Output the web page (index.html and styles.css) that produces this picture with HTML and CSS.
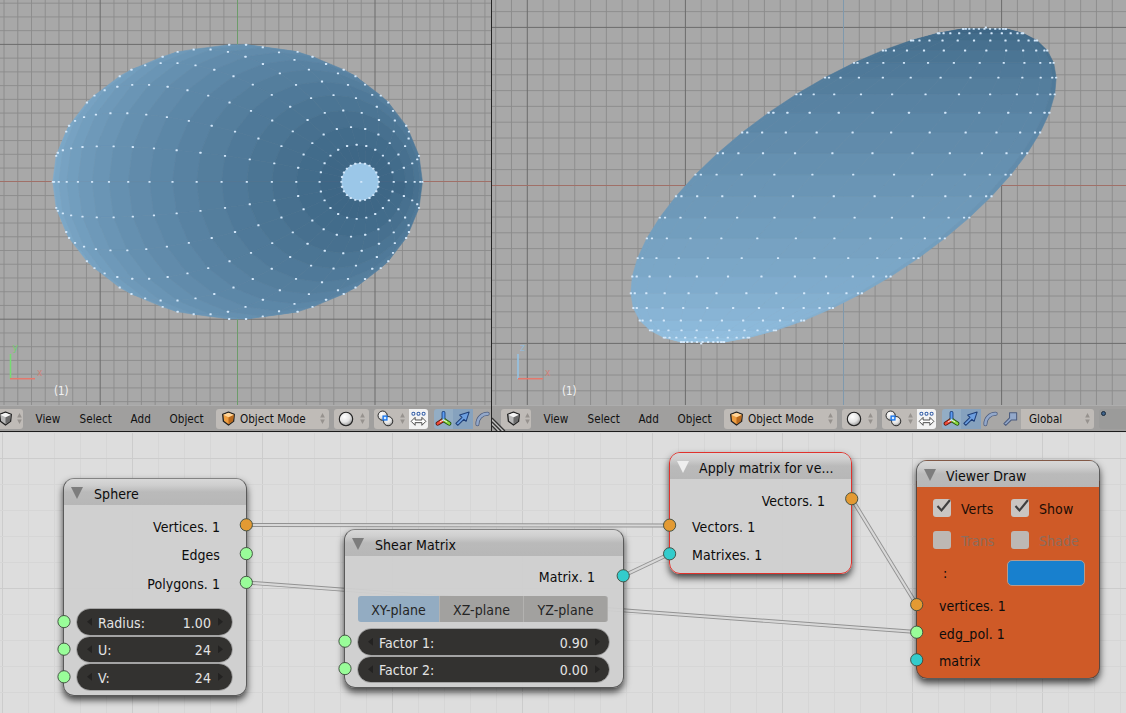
FILE: index.html
```
<!DOCTYPE html>
<html lang="en">
<head>
<meta charset="utf-8">
<title>Shear matrix</title>
<link rel="stylesheet" href="styles.css">
</head>
<body>
<svg class="defs" width="0" height="0">
  <defs>
    <radialGradient id="ball" cx=".38" cy=".32" r=".75"><stop offset="0" stop-color="#fff"/><stop offset=".55" stop-color="#e4e4e4"/><stop offset="1" stop-color="#8d8d8d"/></radialGradient>
    <symbol id="cube" viewBox="0 0 16 16">
      <path d="M8 1.2 14.2 3.6 13.4 11 8 15 2.6 11 1.8 3.6Z" fill="var(--left)" stroke="#222" stroke-width="1.4" stroke-linejoin="round"/>
      <path d="M8 6.6 13.6 4 12.9 10.7 8 14.3Z" fill="var(--right)"/>
      <path d="M8 1.8 13.6 4 8 6.6 2.4 4Z" fill="var(--top)"/>
    </symbol>
    <symbol id="updown" viewBox="0 0 6 14"><path d="M3 .5 5.8 5.8H.2ZM3 13.5 5.8 8.2H.2Z" fill="#96928e"/></symbol>
    <symbol id="sphere" viewBox="0 0 16 16"><circle cx="8" cy="8" r="6.7" fill="url(#ball)" stroke="#222" stroke-width="1.1"/></symbol>
    <symbol id="pivot" viewBox="0 0 18 18">
      <circle cx="6" cy="6" r="4.9" fill="url(#ball)" stroke="#222"/><circle cx="11.8" cy="11.8" r="4.9" fill="url(#ball)" stroke="#222"/>
      <rect x="6.5" y="6.5" width="4" height="4" fill="#d9ecff" stroke="#1b78ee" stroke-width="1.5"/>
    </symbol>
    <symbol id="centers" viewBox="0 0 18 18">
      <g fill="#fff" stroke="#345ea6" stroke-width="1.1"><circle cx="3.6" cy="4" r="1.6"/><circle cx="9" cy="4" r="1.6"/><circle cx="14.4" cy="4" r="1.6"/></g>
      <path d="M1.2 12 5.4 7.8V10.6H12.6V7.8L16.8 12 12.6 16.2V13.4H5.4V16.2Z" fill="#fff" stroke="#444" stroke-linejoin="round"/>
    </symbol>
    <symbol id="axes" viewBox="0 0 18 18">
      <g stroke-linecap="round" fill="none">
        <path d="M9 10.5V3" stroke="#173c78" stroke-width="4"/><path d="M9 10.5 3 14.3" stroke="#5a1a12" stroke-width="4.6"/><path d="M9 10.5 15 14.3" stroke="#25520e" stroke-width="4.6"/>
        <path d="M9 10.5 3 14.3" stroke="#f04a36" stroke-width="2.8"/><path d="M9 10.5 15 14.3" stroke="#8cda3d" stroke-width="2.8"/><path d="M9 10.5V3" stroke="#5c9cf2" stroke-width="2.2"/><path d="M9 10.5 5.5 12.5M9 10.5 12.5 12.5" stroke="#eee" stroke-width="1"/>
      </g>
    </symbol>
    <symbol id="move" viewBox="0 0 18 18"><path d="M2 14.2 8.5 7.8 6 5.4 16 2.2 12.8 12 10.5 9.8 4 16.2Z" fill="#6c9fe0" stroke="#1f3f78" stroke-width="1.1" stroke-linejoin="round"/></symbol>
    <symbol id="rotate" viewBox="0 0 18 18"><path d="M3.6 15C3.6 9 8 4 14.5 4" fill="none" stroke="#4c5c7e" stroke-width="4.2" stroke-linecap="round"/><path d="M3.6 15C3.6 9 8 4 14.5 4" fill="none" stroke="#93a8ca" stroke-width="2.6" stroke-linecap="round"/></symbol>
    <symbol id="scale" viewBox="0 0 18 18"><path d="M2 14.4 8 8.4V3H15.5V10.5H10L4 16.4Z" fill="#93a8ca" stroke="#4c5c7e" stroke-width="1.1" stroke-linejoin="round"/></symbol>
  </defs>
</svg>

<main class="views">
  <section class="view view-top">
    <svg class="canvas" id="top" width="491" height="405" viewBox="0 0 491 405"></svg>
    <div class="bar"></div>
  </section>
  <section class="view view-front">
    <svg class="canvas" id="front" width="634" height="405" viewBox="492 0 634 405"></svg>
    <div class="bar"></div>
    <svg class="corner" width="14" height="14" viewBox="0 0 14 14"><path d="M0 1 13 14M0 5 9 14M0 9 5 14" stroke="#333" stroke-width="1.2"/><path d="M0 3 11 14M0 7 7 14" stroke="#ccc" stroke-width=".8"/></svg>
  </section>
</main>

<section class="editor">
  <svg class="links" id="links" width="1126" height="281" viewBox="0 432 1126 281"></svg>

  <article class="node sphere">
    <header class="title"><i class="fold"></i>Sphere</header>
    <div class="outputs"><span>Vertices. 1</span><span class="plain">Edges</span><span>Polygons. 1</span></div>
    <div class="fields">
      <div class="field"><b class="dec"></b><span>Radius:</span><span class="val">1.00</span><b class="inc"></b></div>
      <div class="field"><b class="dec"></b><span>U:</span><span class="val">24</span><b class="inc"></b></div>
      <div class="field"><b class="dec"></b><span>V:</span><span class="val">24</span><b class="inc"></b></div>
    </div>
  </article>

  <article class="node shear">
    <header class="title"><i class="fold"></i>Shear Matrix</header>
    <div class="outputs"><span>Matrix. 1</span></div>
    <div class="tabs"><span class="tab on">XY-plane</span><span class="tab">XZ-plane</span><span class="tab">YZ-plane</span></div>
    <div class="fields">
      <div class="field"><b class="dec"></b><span>Factor 1:</span><span class="val">0.90</span><b class="inc"></b></div>
      <div class="field"><b class="dec"></b><span>Factor 2:</span><span class="val">0.00</span><b class="inc"></b></div>
    </div>
  </article>

  <article class="node apply">
    <header class="title"><i class="fold"></i>Apply matrix for ve...</header>
    <div class="outputs"><span>Vectors. 1</span></div>
    <div class="inputs"><span>Vectors. 1</span><span>Matrixes. 1</span></div>
  </article>

  <article class="node viewer">
    <header class="title"><i class="fold"></i>Viewer Draw</header>
    <div class="checks">
      <label><svg class="box" viewBox="0 0 18 18"><path d="M4.5 7 8.5 11.5 17 1" fill="none" stroke="#3f3f3f" stroke-width="2.1"/></svg>Verts</label>
      <label><svg class="box" viewBox="0 0 18 18"><path d="M4.5 7 8.5 11.5 17 1" fill="none" stroke="#3f3f3f" stroke-width="2.1"/></svg>Show</label>
      <label class="off"><svg class="box" viewBox="0 0 18 18"></svg>Trans</label>
      <label class="off"><svg class="box" viewBox="0 0 18 18"></svg>Shade</label>
    </div>
    <div class="color"><span>:</span><span class="swatch"></span></div>
    <div class="inputs"><span>vertices. 1</span><span>edg_pol. 1</span><span>matrix</span></div>
  </article>

  <svg class="links" id="sockets" width="1126" height="281" viewBox="0 432 1126 281"></svg>
</section>

<template id="bar">
  <span class="btn editor-type"><svg class="cube gray"><use href="#cube"/></svg><svg class="ud"><use href="#updown"/></svg></span>
  <span class="m m1">View</span><span class="m m2">Select</span><span class="m m3">Add</span><span class="m m4">Object</span>
  <span class="btn mode"><svg class="cube orange"><use href="#cube"/></svg><span>Object Mode</span><svg class="ud"><use href="#updown"/></svg></span>
  <span class="btn shading"><svg class="i16"><use href="#sphere"/></svg><svg class="ud"><use href="#updown"/></svg></span>
  <span class="btn pivot"><svg class="i18"><use href="#pivot"/></svg><svg class="ud"><use href="#updown"/></svg></span>
  <span class="btn centers"><svg class="i18"><use href="#centers"/></svg></span>
  <span class="btn tool blue first"><svg class="i18"><use href="#axes"/></svg></span>
  <span class="btn tool blue2"><svg class="i18"><use href="#move"/></svg></span>
  <span class="btn tool"><svg class="i18"><use href="#rotate"/></svg></span>
  <span class="btn tool wide-only"><svg class="i18"><use href="#scale"/></svg></span>
  <span class="btn global wide-only"><span>Global</span><svg class="ud"><use href="#updown"/></svg></span>
  <span class="btn layers wide-only"><i></i></span>
</template>
<script src="scene.js"></script>
</body>
</html>
```
FILE: styles.css
```
* { box-sizing: border-box; }
body {
  margin: 0; width: 1126px; height: 713px; overflow: hidden;
  display: flex; flex-direction: column; background: #ddd;
  font-family: "DejaVu Sans Condensed", "DejaVu Sans", sans-serif;
  font-stretch: condensed; color: #0c0c0c;
}
svg { display: block; flex: none; }
.defs { position: absolute; }

.views { display: flex; height: 432px; flex: none; border-bottom: 1.5px solid #1c1c1c; }
.view { display: flex; flex-direction: column; overflow: hidden; position: relative; }
.view-top { width: 492px; border-right: 1px solid #252525; }
.view-front { width: 634px; }
.canvas { background: #a8a8a8; }

.bar {
  flex: 1; display: flex; align-items: center; padding: 0 0 0 9px; width: 700px;
  background: #a09f9e; border-top: 1px solid #adadad; font-size: 11.6px; color: #111;
}
.view-top .bar { margin-left: -16px; }
.view-top .wide-only { display: none; }
.btn { display: flex; align-items: center; flex: none; height: 20px; background: #bfbbb7; border-radius: 3px; }
.ud { width: 5px; height: 13px; }
.i16 { width: 16px; height: 16px; }
.i18 { width: 17px; height: 17px; }
.cube { width: 15px; height: 15px; }
.gray { --left: #b8b8b8; --right: #6b6b6b; --top: #f5f5f5; }
.orange { --left: #ef9f42; --right: #b9691c; --top: #ffd59a; }
.editor-type { width: 30px; padding-left: 5px; gap: 4px; }
.m { flex: none; }
.m1 { width: 44px; margin-left: 12.6px; }
.m2 { width: 51px; }
.m3 { width: 39px; }
.m4 { width: 46.4px; }
.mode { width: 113px; padding: 0 4px 0 5px; gap: 4px; }
.mode .ud, .global .ud { margin-left: auto; }
.shading { width: 35px; margin-left: 5px; padding-left: 4px; gap: 6px; }
.pivot { width: 35px; margin-left: 5px; padding-left: 3px; gap: 6px; border-radius: 3px 0 0 3px; }
.centers { width: 19px; padding-left: 1px; background: #f3f3f3; border-radius: 0 3px 3px 0; }
.tool { width: 20px; padding-left: 1px; border-radius: 0; background: #a8a7a6; }
.first { margin-left: 6px; width: 19px; border-radius: 3px 0 0 3px; }
.blue { background: #93adc4; }
.blue2 { background: #86a2be; }
.global { width: 73px; padding: 0 4px 0 8px; border-radius: 0 3px 3px 0; }
.layers { width: 60px; margin-left: 5px; background: #9b9b9a; align-items: flex-start; padding: 2px; }
.layers i { width: 5px; height: 5px; border-radius: 50%; background: #3f638a; border: 1px solid #1d2c3c; }
.corner { position: absolute; left: 0; bottom: 0; }

.editor {
  position: relative; height: 281px; flex: none; overflow: hidden;
  font-size: 14px; line-height: 16px; letter-spacing: .07px;
}
.links { position: absolute; left: 0; top: 0; }
.node {
  position: absolute; border: 1px solid rgba(70,70,70,.85); border-top-color: rgba(90,90,90,.65);
  border-radius: 11px; background: rgba(207,207,207,.94);
  box-shadow: 0 4px 7px rgba(0,0,0,.7);
}
.sphere { left: 63px; top: 46px; width: 184px; height: 218px; }
.shear { left: 344px; top: 97px; width: 280px; height: 159px; }
.apply { left: 669px; top: 20px; width: 183px; height: 122px; border-color: #e0322c; }
.viewer { left: 916px; top: 28px; width: 184px; height: 219px; background: linear-gradient(#d8d8d8 20px, #cf5a27 20px); }
.title {
  height: 26px; padding: 7px 0 0 8px; display: flex; gap: 9px; white-space: nowrap;
  border-radius: 10px 10px 0 0;
  background: linear-gradient(#d8d8d8, #cfcfcf 6px, #bababa 13px, #b7b7b7);
}
.apply .title, .viewer .title { padding-top: 7px; }
.title > .fold { width: 12px; height: 12px; margin: 1px 2px 0 -1px; background: #7d7d7d; clip-path: polygon(0 0, 100% 0, 50% 100%); }
.apply .fold { background: #eee; }
.apply .fold, .viewer .fold { margin-right: 1px; }
.outputs { display: grid; justify-items: end; align-items: center; }
.sphere .outputs { grid-template-rows: 28px 28px 30px; padding: 8px 26px 0 0; }
.fields { display: flex; flex-direction: column; gap: 2px; padding: 0 14px 0 13px; }
.sphere .fields { margin-top: 10px; }
.field {
  display: flex; align-items: center; height: 25.5px; padding: 2px 9px 0 10px;
  background: #333230; color: #e4e4e4; border-radius: 13px; outline: 1px solid #77777780;
}
.field .val { margin-left: auto; }
.dec, .inc { width: 5px; height: 8px; margin-top: -2px; background: #232221; clip-path: polygon(100% 0, 100% 100%, 0 50%); }
.dec { margin-right: 6px; }
.inc { margin-left: 7px; clip-path: polygon(0 0, 0 100%, 100% 50%); }
.shear .outputs { padding: 13px 28px 0 0; }
.tabs { display: grid; grid-template-columns: 82px 84px 84px; margin: 11px 13px 7px; height: 26px; color: #242424; }
.tab { display: grid; place-items: center; padding-top: 1px; background: #a2a19f; border-right: 1px solid #b3b2b0; }
.tab.on { background: #93acc2; border-radius: 3px 0 0 3px; }
.tab:last-child { border-radius: 0 3px 3px 0; }
.apply .outputs { padding: 14px 26px 0 0; }
.inputs { display: flex; flex-direction: column; gap: 12px; padding-left: 22px; }
.apply .inputs { padding-top: 10px; }
.checks { display: grid; grid-template-columns: 78px 90px; row-gap: 14px; padding: 12px 0 0 16px; color: #1a0d06; }
.checks label { display: flex; align-items: center; gap: 10px; height: 18px; padding-top: 1px; }
.checks .off { color: #8c6c5d; }
.box { width: 18px; height: 18px; margin-top: -1px; background: #c9c5c2; border-radius: 3px; }
.off .box { background: #bdb8b4; }
.color { display: flex; justify-content: space-between; align-items: center; padding: 11px 14px 0 26px; }
.swatch { width: 78px; height: 26px; border-radius: 5px; background: #1880ce; border: 1px solid #b79a8b; }
.viewer .inputs { padding-top: 12px; gap: 11.5px; }
```
FILE: scene.js
```
const el = (svg, tag, attrs) => {
  const n = document.createElementNS('http://www.w3.org/2000/svg', tag);
  for (const k in attrs) n.setAttribute(k, attrs[k]);
  svg.appendChild(n);
  return n;
};
const line = (svg, x1, y1, x2, y2, stroke, w = 1) => el(svg, 'line', { x1, y1, x2, y2, stroke, 'stroke-width': w });

for (const bar of document.querySelectorAll('.bar')) {
  bar.appendChild(document.getElementById('bar').content.cloneNode(true));
}

// Sphere with U segments and V rings, x sheared by z.
const U = 24, V = 23, SHEAR = 0.9;
const vertex = (k, j) => {
  const p = k * Math.PI / V, t = j * 2 * Math.PI / U;
  return [Math.sin(p) * Math.cos(t), Math.sin(p) * Math.sin(t), Math.cos(p)];
};
const shade = f => {
  const a = [62, 103, 134], b = [149, 194, 227];
  return 'rgb(' + a.map((v, i) => Math.round(v + (b[i] - v) * f)).join() + ')';
};

function grid(svg, o) {
  for (let i = -60; i <= 60; i++) {
    if (i % 10) {
      line(svg, o.cx + i * o.ux / 10, 0, o.cx + i * o.ux / 10, 405, '#8b8b8b', .9);
      line(svg, 0, o.cy + i * o.uy / 10, 1126, o.cy + i * o.uy / 10, '#8b8b8b', .9);
    }
  }
  for (const i of [-3, -2, -1, 1, 2, 3]) {
    line(svg, o.cx + i * o.ux, 0, o.cx + i * o.ux, 405, '#6c6c6c');
    line(svg, 0, o.cy + i * o.uy, 1126, o.cy + i * o.uy, '#6c6c6c');
  }
  line(svg, 0, Math.floor(o.cy) + .5, 1126, Math.floor(o.cy) + .5, '#a07068');
  line(svg, Math.floor(o.cx) + .5, 0, Math.floor(o.cx) + .5, 405, o.axis);
}

function mesh(svg, o, project, facing) {
  const pts = list => list.map(v => project(v).map(n => n.toFixed(2)).join()).join(' ');
  for (let k = V - 2; k >= 1; k--) {
    for (let j = 0; j < U; j++) {
      if (!facing(vertex(k + .5, j + .5))) continue;
      const f = (k - 1 + (j === 23 ? -1 : 0)) / (V - 3);
      const c = shade(Math.max(0, f));
      el(svg, 'polygon', { points: pts([vertex(k, j), vertex(k, j + 1), vertex(k + 1, j + 1), vertex(k + 1, j)]), fill: c, stroke: c, 'stroke-width': .6 });
    }
  }
  if (o.cap) {
    const cap = [];
    for (let j = 0; j < U; j++) cap.push(vertex(1, j));
    el(svg, 'polygon', { points: pts(cap), fill: '#9bc7e8' });
  }
  const dot = v => {
    const [x, y] = project(v);
    el(svg, 'rect', { x: x - 1.1, y: y - .9, width: 2.2, height: 1.9, rx: .5, fill: '#d3e8fb' });
  };
  dot([0, 0, 1]);
  if (!o.cap) dot([0, 0, -1]);
  for (let k = 1; k < V; k++) {
    for (let j = 0; j < U; j++) {
      const v = vertex(k, j);
      if (facing(v, .13)) dot(v);
    }
  }
}

const label = (svg, x, y, s, fill, size) => {
  const t = el(svg, 'text', { x, y, fill, 'font-size': size });
  t.textContent = s;
};

const top_ = document.getElementById('top');
const T = { cx: 237.6, cy: 181.8, ux: 137.4, uy: 137.4, axis: '#6d9c6b', cap: true };
grid(top_, T);
mesh(top_, T, ([x, y, z]) => [T.cx + (x + SHEAR * z) * T.ux, T.cy - y * T.uy],
  ([x, y, z], e = 0) => z - SHEAR * x > -e);
line(top_, 10.5, 354, 10.5, 379, '#76dc72', 1.5);
line(top_, 10, 378.7, 35, 378.7, '#e5786c', 1.5);
label(top_, 12.5, 351, 'y', '#72cc70', 10.5);
label(top_, 37, 376, 'x', '#cf8278', 10);
label(top_, 54, 395, '(1)', '#f2f2f2', 11.5);

const front = document.getElementById('front');
const F = { cx: 843.5, cy: 185.4, ux: 158.1, uy: 158, axis: '#7f99ad' };
grid(front, F);
mesh(front, F, ([x, y, z]) => [F.cx + (x + SHEAR * z) * F.ux, F.cy - z * F.uy],
  ([x, y, z], e = 0) => y < (e ? 1e-6 : 0));
line(front, 518, 354, 518, 379, '#93c4e8', 1.5);
line(front, 518, 378.7, 543, 378.7, '#e5786c', 1.5);
label(front, 520, 351, 'z', '#93b9d6', 10.5);
label(front, 545, 376, 'x', '#cf8278', 10);
label(front, 562, 395, '(1)', '#f2f2f2', 11.5);

// Node editor backdrop and links.
const links = document.getElementById('links');
for (let i = 0; i < 44; i++) line(links, 2.5 + i * 26, 432, 2.5 + i * 26, 713, i % 5 ? '#d6d6d6' : '#cccccc');
for (let i = 0; i < 11; i++) line(links, 0, 432.5 + i * 26, 1126, 432.5 + i * 26, i % 5 === 1 ? '#cccccc' : '#d6d6d6');
for (const [a, b, c, d] of [[246, 525, 670, 525.5], [246, 582.5, 916.5, 632], [623, 576, 670, 553.7], [851.7, 498.7, 916.5, 604.5]]) {
  line(links, a, b, c, d, '#929292', 4);
  line(links, a, b, c, d, '#d8d8d8', 2.2);
}

const sockets = document.getElementById('sockets');
const O = '#e39a33', G = '#99fd99', C = '#33cccc';
for (const [x, y, fill] of [
  [246.3, 524.8, O], [246.3, 553.6, G], [246.3, 582.4, G], [64, 621.6, G], [64, 649.2, G], [64, 676.8, G],
  [623.2, 575.8, C], [345, 641.2, G], [345, 668.6, G],
  [851.7, 498.7, O], [669.6, 525.2, O], [669.6, 553.8, C],
  [916.7, 604.6, O], [916.7, 632.2, G], [916.7, 659.8, C]
]) el(sockets, 'circle', { cx: x, cy: y, r: 6.1, fill, stroke: '#3c4a3c', 'stroke-width': .9 });
```
